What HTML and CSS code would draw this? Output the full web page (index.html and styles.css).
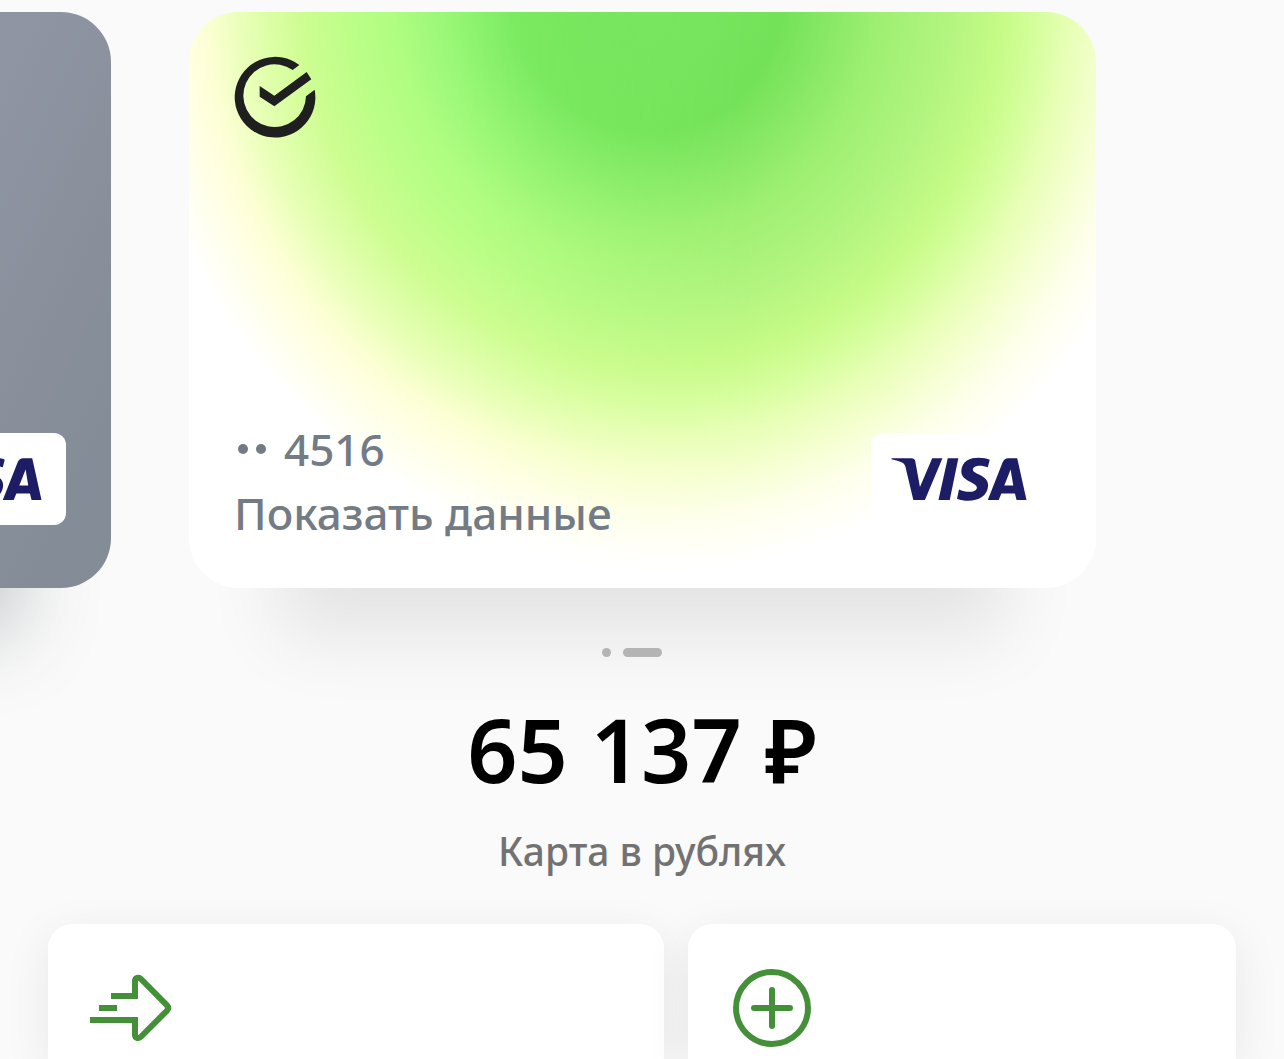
FILE: index.html
```html
<!DOCTYPE html>
<html lang="ru">
<head>
<meta charset="utf-8">
<meta name="viewport" content="width=device-width, initial-scale=1">
<title>Карта в рублях</title>
<link rel="stylesheet" href="styles.css">
</head>
<body>
<svg class="sprite" aria-hidden="true">
  <symbol id="visa" viewBox="92 96 408 133">
    <path d="M92 100H152Q162 100 164 110L178 187L215 100H246L193 226H158L136 134Q134 118 124 113Q112 107 92 103Z"/>
    <path d="M262 100H294L268 226H234Z"/>
    <path d="M389 104C370 96 305 88 303 139C302 170 350 173 350 188C350 204 318 205 296 194L290 222C330 237 382 225 384 182C385 150 337 148 338 134C339 120 365 120 383 127Z"/>
    <path fill-rule="evenodd" d="M445 100H472L500 226H470L465 206H424L416 226H383L428 112Q433 100 445 100ZM452 134L433 182H460Z"/>
  </symbol>
</svg>
<main class="page">
  <section class="carousel" aria-label="Карты">
    <article class="card card-prev">
      <span class="chip"><svg class="visa" role="img" aria-label="Visa"><use href="#visa"/></svg></span>
    </article>
    <article class="card card-active">
      <svg class="bank-logo" viewBox="42 36 243 243" role="img" aria-label="Сбер">
        <path d="M284 137A121 121 0 1 1 238 63L218 78A94 94 0 1 0 258 157Z"/>
        <path d="M119 126L163 155L260 84L274 106L163 187L119 158Z"/>
      </svg>
      <div class="card-footer">
        <div class="card-info">
          <p class="card-number"><span class="mask"><i></i><i></i></span>4516</p>
          <button class="reveal" type="button">Показать данные</button>
        </div>
        <span class="chip"><svg class="visa" role="img" aria-label="Visa"><use href="#visa"/></svg></span>
      </div>
    </article>
  </section>
  <div class="pager"><span class="dot"></span><span class="dot dot-current"></span></div>
  <h1 class="balance">65 137 ₽</h1>
  <p class="caption">Карта в рублях</p>
  <nav class="actions">
    <button class="tile" type="button" aria-label="Перевести">
      <svg class="tile-icon" viewBox="150 168 252 252">
        <path d="M213 258H285V213C285 203 297 201 303 207L381 286Q388 294 381 302L303 380C297 387 285 385 285 375V330H150M177 294H231"/>
      </svg>
    </button>
    <button class="tile" type="button" aria-label="Пополнить">
      <svg class="tile-icon tile-icon-round" viewBox="270 168 252 252">
        <circle cx="396" cy="294" r="108"/>
        <path d="M342 294H450M396 240V348"/>
      </svg>
    </button>
  </nav>
</main>
</body>
</html>
```
FILE: styles.css
```css
* {
  box-sizing: border-box;
}

body {
  margin: 0;
  background: #fafafa;
  font-family: "Noto Sans", "Open Sans", sans-serif;
}

p,
h1 {
  margin: 0;
}

button {
  border: 0;
  padding: 0;
  background: none;
  font: inherit;
  color: inherit;
  cursor: pointer;
}

.sprite {
  position: absolute;
  width: 0;
  height: 0;
}

.page {
  display: flex;
  flex-direction: column;
  min-height: 100vh;
  overflow: hidden;
}

.carousel {
  display: grid;
  grid-template-columns: 111px 1fr;
  gap: 78px;
  padding: 12px 188px 0 0;
}

.card {
  display: flex;
  flex-direction: column;
  min-height: 576px;
  padding: 44px 45px;
  border-radius: 50px;
  box-shadow: 0 138px 72px -90px rgba(0, 0, 0, 0.09);
}

.card-prev {
  align-items: flex-end;
  justify-content: flex-end;
  margin-left: -796px;
  padding-bottom: 63px;
  background: linear-gradient(115deg, #8f95a3 70%, #888f9a 86%, #838c97 94%);
  box-shadow: 0 138px 72px -90px rgba(60, 70, 80, 0.26);
}

.card-active {
  position: relative;
  isolation: isolate;
  justify-content: space-between;
  padding-bottom: 43px;
  background: radial-gradient(542px 588px at 51% -28px, #7ae861 0, #74e259 25%, #9def72 42%, #b4f580 56%, #c6fb87 65%, #d4fe9b 71%, #e9ffb8 78%, #f3ffcc 83%, #ffffee 92%, #fff 100%);
}

.card-active::before {
  content: "";
  position: absolute;
  z-index: -1;
  inset: 0;
  border-radius: inherit;
  background: radial-gradient(542px 588px at 51% -28px, #76e45c 0, #7cec63 26%, #98f776 38%, #b0fd82 48%, #bcfe87 56%, #cefd92 65%, #e6ffb4 75%, #fbffd2 82%, #ffffe0 86%, #fff 97%);
  -webkit-mask-image: linear-gradient(90deg, #000 30%, transparent 62%);
  mask-image: linear-gradient(90deg, #000 30%, transparent 62%);
}

.bank-logo {
  width: 81px;
  height: 81px;
  overflow: visible;
  fill: #1f1f1f;
}

.card-footer {
  display: flex;
  justify-content: space-between;
  align-items: flex-start;
}

.card-info {
  display: flex;
  flex-direction: column;
  align-items: flex-start;
  font-size: 44px;
  font-weight: 500;
  line-height: 64px;
  color: #737b84;
}

.card-number {
  display: flex;
  align-items: center;
  gap: 18px;
  margin-top: -16px;
}

.mask {
  display: flex;
  gap: 8px;
  padding-left: 4px;
}

.mask i {
  width: 10px;
  height: 10px;
  border-radius: 50%;
  background: currentColor;
}

.chip {
  display: flex;
  flex: none;
  align-items: center;
  width: 180px;
  height: 92px;
  padding-left: 20px;
  border-radius: 12px;
  background: #fff;
}

.visa {
  width: 136px;
  height: 44px;
  fill: #1d1d66;
}

.pager {
  display: flex;
  justify-content: center;
  gap: 12px;
  margin-top: 60px;
  padding-right: 20px;
}

.dot {
  width: 9px;
  height: 9px;
  border-radius: 5px;
  background: #bababa;
}

.dot-current {
  width: 39px;
}

.balance {
  margin-top: 32px;
  text-align: center;
  font-size: 88px;
  font-weight: 600;
  line-height: 120px;
  color: #000;
}

.caption {
  margin-top: 14px;
  text-align: center;
  font-size: 39px;
  font-weight: 500;
  line-height: 56px;
  color: #727272;
}

.actions {
  display: grid;
  flex: 1;
  grid-template-columns: 616fr 548fr;
  gap: 24px;
  margin-top: 45px;
  padding: 0 48px;
}

.tile {
  display: flex;
  align-items: flex-start;
  min-height: 135px;
  padding: 42px 42px 0;
  border-radius: 24px 24px 0 0;
  background: #fff;
  box-shadow: 0 12px 48px rgba(0, 0, 0, 0.08);
}

.tile-icon {
  width: 84px;
  height: 84px;
  fill: none;
  stroke: #449039;
  stroke-width: 18;
}

.tile-icon-round {
  stroke-linecap: round;
}
```
